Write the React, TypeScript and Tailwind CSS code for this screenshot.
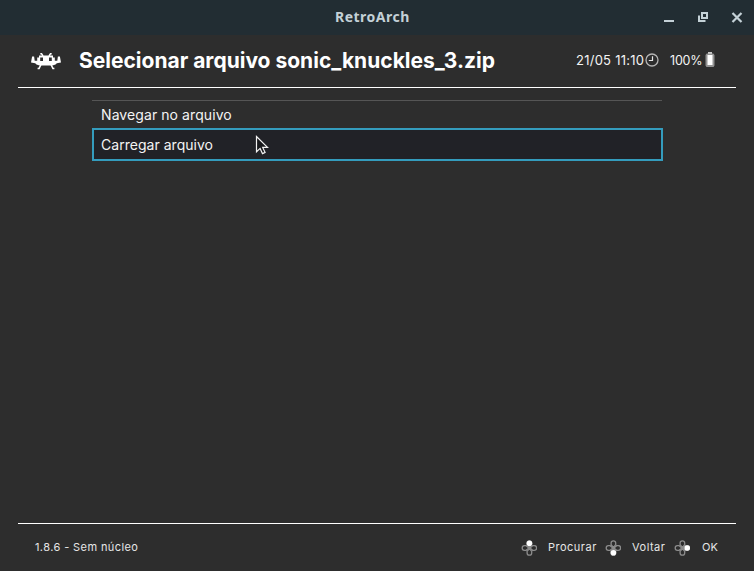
import React from 'react';

function InvaderLogo() {
  return (
    <svg className="block h-[17px] w-[30px] shrink-0" viewBox="0 0 30 17" fill="#fff">
      <path
        fillRule="evenodd"
        d="M8 2.600h14V4.500h1.800v3.300h2.500l.6-4.200h2L30 9.600l-4.200.6-1.300 1.200-3 1H8.500l-3-1-1.300-1.200L0 9.600l1.100-6h2l.6 4.200h2.500V4.500H8zM9.200 4.600v3.400h2.800V4.600zm8.800 0v3.400h2.800V4.600z"
      />
      <path
        d="M9.300.7h1.200L12 3M20.700.7h-1.200L18 3M10 11.500l-1.900 3.900H6.600M20 11.500l1.900 3.900h1.500"
        stroke="#fff"
        strokeWidth="1.500"
        fill="none"
      />
    </svg>
  );
}

function ClockIcon() {
  return (
    <svg className="-mt-[2px] block h-[14px] w-[14px] shrink-0" viewBox="0 0 14 14" fill="none">
      <circle cx="7" cy="7" r="6" stroke="#b4b4b4" strokeWidth="1.300" />
      <path d="M3.800 7.500H7.500V3.200" stroke="#e8e8e8" strokeWidth="1.200" />
    </svg>
  );
}

function BatteryIcon() {
  return (
    <svg className="-mt-[3px] block h-[15px] w-[10px] shrink-0" viewBox="0 0 10 15">
      <path d="M3 0h4v1.500h1.300L9.500 3v10.500L8.500 15h-7l-1-1.500V3l1.200-1.500H3z" fill="#929292" />
      <rect x="2.500" y="3" width="5" height="10" fill="#fff" />
      <rect x="3" y=".3" width="4" height="1.200" fill="#e0e0e0" />
    </svg>
  );
}

function DPad({ active }: { active: 'up' | 'down' | 'right' }) {
  const dot = { up: [8, 3.2], down: [8, 12.800], right: [12.800, 8] }[active];
  return (
    <svg className="block h-[16px] w-[16px] shrink-0" viewBox="-0.4 0 16 16" fill="none">
      <g stroke="#8c8c8c" strokeWidth="1.300">
        <path d="M8 7.400L5.700 4.800V3Q5.700.8 8 .8T10.300 3v1.800z" />
        <path d="M8 8.600L5.700 11.200V13q0 2.200 2.300 2.200T10.300 13v-1.800z" />
        <path d="M7.400 8L4.800 5.700H3Q.8 5.700.8 8T3 10.300h1.800z" />
        <path d="M8.600 8l2.600-2.300H13q2.200 0 2.200 2.300T13 10.300h-1.800z" />
      </g>
      <circle cx={dot[0]} cy={dot[1]} r="2.800" fill="#fff" />
    </svg>
  );
}

function TitleBar() {
  return (
    <div className="flex h-[35px] items-center bg-[#222d33] pt-px text-[#c4d1d7]">
      <div className="w-[335px]" />
      <div className="w-[329px] pb-[2px] font-['Noto_Sans',sans-serif] text-[14px] leading-[20px] font-bold tracking-[0.5px]">
        RetroArch
      </div>
      <svg className="h-[12px] w-[80px]" viewBox="0 0 80 12" fill="none" stroke="#c4d1d7">
        <path d="M0 9h10" strokeWidth="2" />
        <path d="M38 1h5v5h-5z" strokeWidth="2" />
        <path d="M35 3.500V9h6.500" strokeWidth="2" />
        <path d="M68.500 1l9 9m0-9l-9 9" strokeWidth="2.200" />
      </svg>
    </div>
  );
}

export default function App() {
  return (
    <div className="flex h-[571px] w-[754px] flex-col overflow-hidden bg-[#2d2d2d] font-[Inter,sans-serif] whitespace-nowrap text-[#f4f4f4]">
      <TitleBar />
      <header className="mx-[18px] flex h-[53px] items-center border-b border-white pl-[13px]">
        <InvaderLogo />
        <h1 className="ml-[18px] w-[497px] pb-px text-[21px] leading-[30px] font-bold text-white">
          Selecionar arquivo sonic_knuckles_3.zip
        </h1>
        <span className="w-[69px] text-[13px] tracking-[0.25px]">21/05 11:10</span>
        <ClockIcon />
        <span className="ml-[11px] w-[35px] text-[12.500px] tracking-[-0.2px]">100%</span>
        <BatteryIcon />
      </header>

      <main className="ml-[92px] flex w-[571px] flex-1 flex-col pt-[12px]">
        <div className="mr-px flex h-[28px] items-center border-t border-[#555] pl-[9px] text-[14px] tracking-[0.08px]">
          Navegar no arquivo
        </div>
        <div className="relative flex h-[33px] items-center border-2 border-[#349cbd] bg-[#212227] pl-[7px] text-[14px] tracking-[0.03px]">
          Carregar arquivo
          <svg className="absolute top-[5px] left-[161px] h-[21px] w-[14px]" viewBox="0 0 14 21">
            <path
              d="M1.500 1.500v15.300l3.600-3.400 2.400 5.200 2.600-1.200-2.400-5h4.800z"
              fill="#17181b"
              stroke="#f2f2f2"
              strokeWidth="1.200"
            />
          </svg>
        </div>
      </main>

      <footer className="mx-[18px] flex h-[48px] items-center border-t border-white pl-[17px] text-[11px] text-[#e6e6e6]">
        <span className="w-[486px] tracking-[0.4px]">1.8.6 - Sem núcleo</span>
        <DPad active="up" />
        <span className="ml-[11px] w-[57px] tracking-[0.5px]">Procurar</span>
        <DPad active="down" />
        <span className="ml-[11px] w-[42px] tracking-[0.5px]">Voltar</span>
        <DPad active="right" />
        <span className="ml-[12px]">OK</span>
      </footer>
    </div>
  );
}
